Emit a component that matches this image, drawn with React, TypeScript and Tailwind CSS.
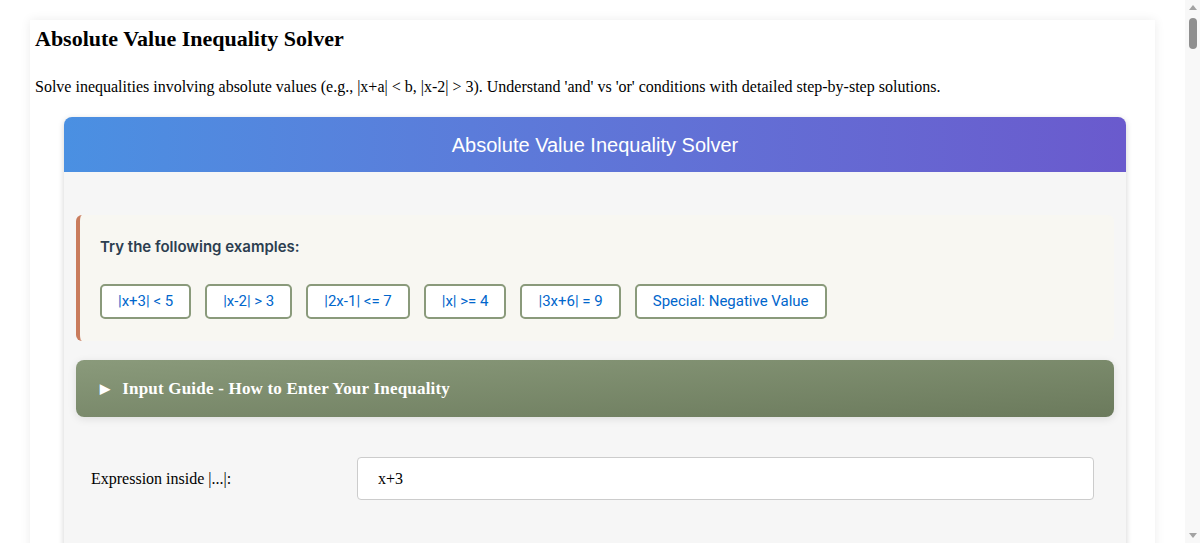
const examples = ['|x+3| < 5', '|x-2| > 3', '|2x-1| <= 7', '|x| >= 4', '|3x+6| = 9', 'Special: Negative Value']

function Scrollbar() {
  return (
    <div className="flex h-full w-[15px] shrink-0 flex-col items-center bg-[#f8f8f8]">
      <div className="mt-[5px] h-0 w-0 border-x-[4px] border-b-[5px] border-x-transparent border-b-[#a3a3a3]" />
      <div className="mt-[8px] h-[31px] w-[8px] rounded-full bg-[#8f8f8f]" />
      <div className="flex-1" />
      <div className="mb-[5px] h-0 w-0 border-x-[4px] border-t-[5px] border-x-transparent border-t-[#a3a3a3]" />
    </div>
  )
}

export default function App() {
  return (
    <div className="flex h-[543px] overflow-hidden bg-white" style={{ fontFamily: '"Liberation Serif", serif' }}>
      <main className="h-full flex-1 overflow-hidden pt-5">
        <div className="mx-[30px] min-h-[900px] bg-white px-[5px] pt-[5px] shadow-[0_0_10px_rgba(0,0,0,0.08)]">
          <h1 className="text-[22px] font-bold leading-[28px] text-black">Absolute Value Inequality Solver</h1>
          <p className="mt-[24px] text-base leading-[20px] text-black">
            Solve inequalities involving absolute values (e.g., |x+a| &lt; b, |x-2| &gt; 3). Understand 'and' vs 'or' conditions with detailed step-by-step solutions.
          </p>

          <div className="ml-[29px] mr-[24px] mt-[20px] overflow-hidden rounded-lg bg-[#f6f6f6] shadow-[0_2px_6px_rgba(0,0,0,0.18)]">
            <div
              className="flex h-[55px] items-center justify-center bg-gradient-to-r from-[#4a90e2] to-[#6a5acd] text-[20px] text-white"
              style={{ fontFamily: '"Liberation Sans", Arial, sans-serif' }}
            >
              Absolute Value Inequality Solver
            </div>

            <div className="min-h-[500px] px-3 pb-10 pt-[43px]">
              <div
                className="rounded-md border-l-4 border-[#c97c5d] bg-[#f8f7f2] px-5 pb-[22px] pt-[22px]"
                style={{ fontFamily: 'Inter, "Noto Sans", sans-serif' }}
              >
                <div className="text-[15px] font-semibold leading-[20px] text-[#2c3e50]">Try the following examples:</div>
                <div className="mt-[27px] flex flex-wrap gap-[14px]">
                  {examples.map((ex) => (
                    <button
                      key={ex}
                      className="h-[35px] rounded-[5px] border-2 border-[#8a9a7b] bg-white px-4 text-[15px] text-[#0066cc]"
                      style={{ fontFamily: 'Roboto, "Liberation Sans", sans-serif' }}
                    >
                      {ex}
                    </button>
                  ))}
                </div>
              </div>

              <div className="mt-[19px] flex h-[57px] items-center gap-3 rounded-lg bg-gradient-to-br from-[#8a9a7b] to-[#6b7a5c] px-6 text-[17px] font-bold tracking-[0.2px] text-white shadow-[0_2px_8px_rgba(0,0,0,0.1)]">
                <span className="text-[13px]">▶</span>
                <span>Input Guide - How to Enter Your Inequality</span>
              </div>

              <div className="mt-[40px] flex items-center px-[15px]">
                <label className="w-[266px] text-base text-black">Expression inside |...|:</label>
                <input
                  defaultValue="x+3"
                  className="h-[43px] flex-1 rounded border border-[#cccccc] bg-white px-5 text-base text-black outline-none"
                  style={{ fontFamily: '"Liberation Serif", serif' }}
                />
                <div className="w-[5px]" />
              </div>
            </div>
          </div>
        </div>
      </main>
      <Scrollbar />
    </div>
  )
}
